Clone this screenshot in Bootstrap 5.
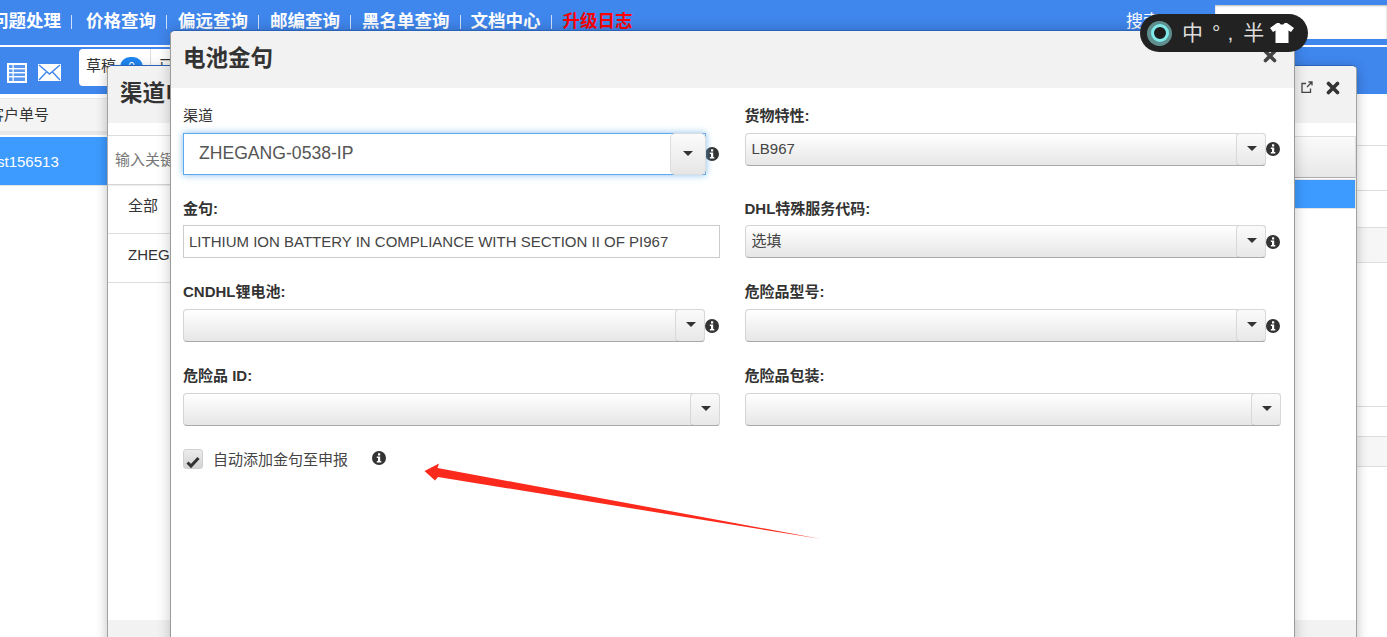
<!DOCTYPE html>
<html lang="zh">
<head>
<meta charset="utf-8">
<title>电池金句</title>
<link rel="stylesheet" href="https://cdn.jsdelivr.net/npm/bootstrap@5.3.0/dist/css/bootstrap.min.css">
<style>
html,body{height:637px;overflow:hidden}
body{background:#fff;color:#333;font-family:"Liberation Sans","Noto Sans CJK SC",sans-serif;font-size:15px;position:relative;width:1387px}
.topbar{background:#3f86ed;height:45px;margin-left:-9px;width:1396px;color:#fff}
.topitem{font-size:17.5px;font-weight:700;color:#fff;text-decoration:none;line-height:42px;white-space:nowrap}
.topitem.hot{color:#f00}
.topsep{width:1px;height:14px;background:#cfe0fa;margin:15px 11px 0 10px}
.topsep.wide{margin-right:14px}
.topsep.tight{margin-right:10px}
.searchlabel{position:absolute;left:1126px;top:12px;font-size:17px;line-height:20px;color:#fff}
.searchbox{position:absolute;left:1215px;top:5px;width:172px;height:34px;background:#fff;border:0;border-radius:0;box-shadow:inset 0 1px 2px #bbb}
.whiteline{height:2px;background:#fff}
.toolbar{background:#3f86ed;height:47px;padding:2px 0 0 7px}
.toolicon{display:block}
.toolicon.first{margin-top:14px;margin-right:11px}
.toolicon.second{margin-top:15px;margin-right:18px}
.statusgroup{height:37px;background:#fff;border-radius:4px;width:200px;color:#333}
.statuscell{padding:8px 6px 0 7px;border-right:1px solid #ddd;width:72px;line-height:18px;white-space:nowrap}
.statuspill{background:#1f86f0;color:#fff;border-radius:12px;padding:1px 8px;font-size:12px;display:inline-block}
.statuscell.next{border:0;width:auto;padding-left:8px}
.backarea{height:543px}
.leftpane{width:108px;overflow:hidden;padding-top:4px}
.headcell{height:37px;background:#f4f4f4;border-top:1px solid #e8e8e8;border-bottom:4px solid #e8e8e8;line-height:31px;white-space:nowrap;text-indent:-11px}
.selcell{margin-top:2px;height:49px;background:#3d9bff;color:#fff;line-height:49px;white-space:nowrap;text-indent:-3px;border-bottom:1px solid #e6e6e6}
.rightpane{flex:1}
.rline{border-bottom:1px solid #ddd}
.rband{background:#f6f6f6}
.win2{position:absolute;left:107px;top:65px;width:1250px;height:590px;background:#fff;border:1px solid #a2a2a2;border-top-color:#2a62b6;border-bottom:0;border-radius:5px 5px 0 0;box-shadow:0 3px 12px rgba(0,0,0,.25)}
.win2head{height:57px;background:#f2f2f2;border-radius:5px 5px 0 0;padding:0 12px;font-size:22.5px;font-weight:700;line-height:55px;white-space:nowrap}
.win2tools{position:absolute;right:16px;top:15px;gap:13px}
.win2left{width:300px}
.win2search{margin-top:12px;height:50px;border-top:1px solid #ddd;border-bottom:1px solid #d5d5d5;padding:14px 7px 0;color:#777;line-height:20px;box-shadow:0 1px 1px #eee}
.win2row{height:49px;border-bottom:1px solid #ddd;padding:0 20px;line-height:42px}
.win2right{flex:1}
.win2band{margin-top:13px;height:42px;background:linear-gradient(#fafafa,#e8e8e8);border:1px solid #ddd;border-bottom:1px solid #aaa}
.win2sel{margin-top:1px;height:30px;background:#3d9bff;border:1px solid #e4e4e4;border-left:0}
.win2foot{position:absolute;left:0;right:0;top:554px;height:40px;background:#f2f2f2}
.win1{position:absolute;left:170px;top:30px;width:1125px;height:620px;background:#fff;border:1px solid #9a9a9a;border-top-color:#2a62b6;border-bottom:0;border-radius:5px 5px 0 0;box-shadow:0 0 14px rgba(0,0,0,.22)}
.win1head{height:57px;background:#f2f2f2;border-radius:5px 5px 0 0;padding:0 12px;font-size:22.5px;font-weight:700;line-height:56px}
.win1close{position:absolute;right:17px;top:18px}
.win1body{padding:19px 13px 0 12px}
.formrow{--bs-gutter-x:25px;--bs-gutter-y:0}
.fieldcell{margin-bottom:25px}
.fieldname{display:block;height:26px;margin:0;font-weight:700;line-height:18px}
.fieldname.nudge{line-height:20px}
.fieldname.plain{font-weight:400}
.pickbox{flex:1 1 auto;height:33px;background:linear-gradient(#fff,#e6e6e6);border:1px solid #d4d4d4;border-bottom-color:#aaa;border-radius:4px;padding:0 6px;line-height:29px;color:#444;position:relative;min-width:0}
.pickbtn{position:absolute;right:-1px;top:-1px;bottom:-1px;width:30px;border:1px solid #d8d8d8;border-bottom-color:#aaa;border-radius:4px;background:linear-gradient(#fbfbfb,#e8e8e8)}
.pickbtn::after{content:"";position:absolute;left:10px;top:12px;border:5px solid transparent;border-top:5px solid #333;border-bottom:0}
.infoslot{flex:0 0 15px;display:flex;justify-content:flex-end;padding-right:1px}
.infopush{margin-top:9px}
.infopush.low{margin-top:10px}
.infopush.big{margin-top:14px}
.pickbox.big{height:42px;margin-bottom:-1px;background:#fff;border:1px solid #5fa8ee;border-radius:0;font-size:17.6px;padding-left:15px;line-height:38px;color:#555;box-shadow:0 0 7px rgba(102,175,233,.8);margin-right:-1px}
.big .pickbtn{width:36px;border-color:#ddd;border-radius:5px;background:linear-gradient(#fbfbfb,#e6e6e6)}
.big .pickbtn::after{left:12px;top:17px}
.plaininput{height:33px;border:1px solid #ccc;border-radius:0;padding:0 5px;font-size:15px;color:#444;box-shadow:none}
.checkrow{margin-top:-2px;height:24px}
.tick{width:20px;height:20px;border:1px solid #d0d0d0;border-radius:3px;background:linear-gradient(#ececec,#d4d4d4);margin-right:10px;margin-top:0}
.ticktext{line-height:21px;color:#444;margin-right:24px}
.tickinfo{margin-top:2px}
.overlayarrow{position:absolute;left:0;top:0;pointer-events:none}
.ime{position:absolute;left:1140px;top:14px;width:168px;height:38px;border-radius:19px;background:#222;color:#ddd;font-size:21px;line-height:38px;padding-left:7px;white-space:nowrap}
.imering{width:25px;height:25px;border-radius:50%;background:#5f8e8e;display:flex;align-items:center;justify-content:center;margin-right:10px;flex:none}
.imering span{display:block;width:18px;height:18px;border-radius:50%;background:#1d1d1d;border:3px solid #7fe8e8}
.imezhong{margin-right:9px}
.imedeg{margin-right:7px}
.imecomma{margin-right:10px}
.imeban{margin-right:5px}
</style>
</head>
<body>
<header>
  <nav class="topbar d-flex">
    <a class="topitem" href="#">问题处理</a><span class="topsep wide"></span>
    <a class="topitem" href="#">价格查询</a><span class="topsep"></span>
    <a class="topitem" href="#">偏远查询</a><span class="topsep"></span>
    <a class="topitem" href="#">邮编查询</a><span class="topsep"></span>
    <a class="topitem" href="#">黑名单查询</a><span class="topsep tight"></span>
    <a class="topitem" href="#">文档中心</a><span class="topsep"></span>
    <a class="topitem hot" href="#">升级日志</a>
  </nav>
  <span class="searchlabel">搜索</span>
  <input class="searchbox form-control" type="text" aria-label="搜索">
  <div class="whiteline"></div>
  <div class="toolbar d-flex">
    <svg class="toolicon first" width="20" height="20" viewBox="0 0 20 20"><rect width="20" height="20" fill="#fff"/><rect x="2" y="2" width="16" height="16" fill="#5a97ef"/><g fill="#fff"><rect x="2" y="5" width="16" height="1.4"/><rect x="2" y="9" width="16" height="1.4"/><rect x="2" y="13" width="16" height="1.4"/><rect x="5.5" y="2" width="1.2" height="16"/></g></svg>
    <svg class="toolicon second" width="23" height="17" viewBox="0 0 23 17"><rect width="23" height="17" fill="#fff"/><path d="M1 1l10.5 9L22 1M1 16l7.500-8M22 16l-7.500-8" fill="none" stroke="#3f86ed" stroke-width="1.400"/></svg>
    <div class="statusgroup d-flex">
      <div class="statuscell">草稿 <span class="statuspill">0</span></div>
      <div class="statuscell next">已</div>
    </div>
  </div>
</header>
<main class="backarea d-flex">
  <div class="leftpane">
    <div class="headcell">客户单号</div>
    <div class="selcell">st156513</div>
  </div>
  <div class="rightpane">
    <div class="rline" style="height:52px"></div>
    <div class="rline" style="height:45px"></div>
    <div class="rline" style="height:37px"></div>
    <div class="rline rband" style="height:35px"></div>
    <div class="rline" style="height:144px"></div>
    <div class="rline" style="height:30px"></div>
    <div class="rline rband" style="height:30px"></div>
  </div>
</main>

<section class="win2">
  <div class="win2head">渠道电池金句</div>
  <div class="win2tools d-flex">
    <svg width="12" height="12" viewBox="0 0 12 12" fill="none" stroke="#444" stroke-width="1.300"><path d="M5 2.500H1v9h8.500V7.500M6 6l5-5M7.500 1H11v3.500"/></svg>
    <svg width="14" height="14" viewBox="0 0 14 14"><path d="M2.500 2.500l9 9M11.500 2.500l-9 9" stroke="#333" stroke-width="3.600" stroke-linecap="round"/></svg>
  </div>
  <div class="d-flex">
    <div class="win2left">
      <div class="win2search">输入关键字</div>
      <div class="win2row">全部</div>
      <div class="win2row">ZHEGANG-0538-IP</div>
    </div>
    <div class="win2right">
      <div class="win2band"></div>
      <div class="win2sel"></div>
    </div>
  </div>
  <div class="win2foot"></div>
</section>

<section class="win1">
  <div class="win1head">电池金句</div>
  <svg class="win1close" width="14" height="14" viewBox="0 0 14 14"><path d="M2.500 2.500l9 9M11.500 2.500l-9 9" stroke="#444" stroke-width="3.600" stroke-linecap="round"/></svg>
  <div class="win1body">
    <svg width="0" height="0" class="position-absolute"><defs><g id="info"><circle cx="7" cy="7" r="7" fill="#333"/><rect x="6" y="2.300" width="2.200" height="2.200" fill="#fff"/><path d="M4.800 5.600H8.200V10H9.300V11.500H4.800V10H6V7.100H4.800z" fill="#fff"/></g></defs></svg>
    <div class="row formrow">
      <div class="col-6 fieldcell">
        <label class="fieldname plain">渠道</label>
        <div class="d-flex">
          <div class="pickbox big">ZHEGANG-0538-IP<span class="pickbtn"></span></div>
          <div class="infoslot"><svg class="infopush big" width="14" height="14"><use href="#info"/></svg></div>
        </div>
      </div>
      <div class="col-6 fieldcell">
        <label class="fieldname">货物特性:</label>
        <div class="d-flex">
          <div class="pickbox">LB967<span class="pickbtn"></span></div>
          <div class="infoslot"><svg class="infopush" width="14" height="14"><use href="#info"/></svg></div>
        </div>
      </div>
      <div class="col-6 fieldcell">
        <label class="fieldname nudge">金句:</label>
        <input class="form-control plaininput" type="text" value="LITHIUM ION BATTERY IN COMPLIANCE WITH SECTION II OF PI967" aria-label="金句">
      </div>
      <div class="col-6 fieldcell">
        <label class="fieldname nudge">DHL特殊服务代码:</label>
        <div class="d-flex">
          <div class="pickbox">选填<span class="pickbtn"></span></div>
          <div class="infoslot"><svg class="infopush low" width="14" height="14"><use href="#info"/></svg></div>
        </div>
      </div>
      <div class="col-6 fieldcell">
        <label class="fieldname">CNDHL锂电池:</label>
        <div class="d-flex">
          <div class="pickbox"><span class="pickbtn"></span></div>
          <div class="infoslot"><svg class="infopush low" width="14" height="14"><use href="#info"/></svg></div>
        </div>
      </div>
      <div class="col-6 fieldcell">
        <label class="fieldname">危险品型号:</label>
        <div class="d-flex">
          <div class="pickbox"><span class="pickbtn"></span></div>
          <div class="infoslot"><svg class="infopush low" width="14" height="14"><use href="#info"/></svg></div>
        </div>
      </div>
      <div class="col-6 fieldcell">
        <label class="fieldname">危险品 ID:</label>
        <div class="pickbox"><span class="pickbtn"></span></div>
      </div>
      <div class="col-6 fieldcell">
        <label class="fieldname">危险品包装:</label>
        <div class="pickbox"><span class="pickbtn"></span></div>
      </div>
    </div>
    <div class="checkrow d-flex">
      <span class="tick d-block"><svg width="18" height="18" viewBox="0 0 18 18"><path d="M3.500 9.500l3.500 3.500L14.500 5" fill="none" stroke="#333" stroke-width="3"/></svg></span>
      <span class="ticktext">自动添加金句至申报</span>
      <svg class="tickinfo" width="14" height="14"><use href="#info"/></svg>
    </div>
  </div>
</section>

<svg class="overlayarrow" width="1387" height="637" viewBox="0 0 1387 637">
  <path d="M424.500 471L439 463.500L437.500 468L821 539L438 477L435 480.500z" fill="#fb2a1c"/>
</svg>

<div class="ime d-flex align-items-center">
  <div class="imering"><span></span></div>
  <span class="imezhong">中</span>
  <span class="imedeg">°</span>
  <span class="imecomma">,</span>
  <span class="imeban">半</span>
  <svg width="26" height="24" viewBox="0 0 26 24"><path d="M8 2h2.500c.5 2 4.500 2 5 0H18l7 5-3 4-2.500-1.500V22h-13V9.500L4 11 1 7z" fill="#fff"/></svg>
</div>
<script src="https://cdn.jsdelivr.net/npm/bootstrap@5.3.0/dist/js/bootstrap.bundle.min.js"></script>
</body>
</html>
